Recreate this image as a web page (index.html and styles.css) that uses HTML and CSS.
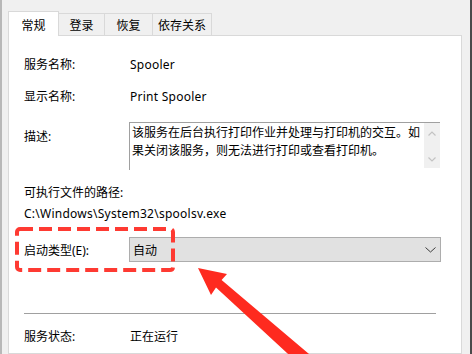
FILE: index.html
```html
<!DOCTYPE html>
<html>
<head>
<meta charset='utf-8'>
<title>Print Spooler 的属性</title>
<link rel="stylesheet" href="styles.css">
</head>
<body>

<div class="window">
	<div class="tabs">
		<div class="tab active w1">常规</div>
		<div class="tab w2">登录</div>
		<div class="tab w3">恢复</div>
		<div class="tab w4">依存关系</div>
	</div>

	<div class="panel">
		<div class="row first">
			<span class="label">服务名称:</span>
			<span class="value latin">Spooler</span>
		</div>
		<div class="row gap12">
			<span class="label">显示名称:</span>
			<span class="value latin">Print Spooler</span>
		</div>

		<div class="desc-row">
			<span class="label desc-label">描述:</span>
			<div class="desc">
				<div class="desc-text">该服务在后台执行打印作业并处理与打印机的交互。如果关闭该服务，则无法进行打印或查看打印机。</div>
				<div class="scroll">
					<svg width="8" height="5" viewBox="0 0 8 5"><polyline points="0.5,4.5 4,1 7.5,4.5" fill="none" stroke="#c3c3c3" stroke-width="1.2"/></svg>
					<svg width="8" height="5" viewBox="0 0 8 5"><polyline points="0.5,0.5 4,4 7.5,0.5" fill="none" stroke="#c3c3c3" stroke-width="1.2"/></svg>
				</div>
			</div>
		</div>

		<div class="row gap13">可执行文件的路径:</div>
		<div class="row gap1 latin">C:\Windows\System32\spoolsv.exe</div>

		<div class="combo-row">
			<span class="label">启动类型(E):</span>
			<div class="combo">
				<span>自动</span>
				<svg width="11" height="6" viewBox="0 0 11 6"><polyline points="0.5,0.5 5.5,5 10.5,0.5" fill="none" stroke="#3c3c3c" stroke-width="1"/></svg>
			</div>
		</div>

		<div class="sep"></div>

		<div class="row gap13">
			<span class="label">服务状态:</span>
			<span class="value">正在运行</span>
		</div>
	</div>
</div>

<!-- annotation drawn over the dialog -->
<svg class="marks" width="472" height="354" viewBox="0 0 472 354">
	<rect x="17" y="229" width="156" height="41" rx="3" fill="none" stroke="#fe3a32" stroke-width="4" stroke-dasharray="13 6"/>
	<polygon points="198,268 227,274 221.6,280 322,365 300,365 216,287.4 211,295" fill="#fe2a1f"/>
</svg>

</body>
</html>
```

FILE: styles.css
```css
body, html {
	margin: 0;
	background: #f0f0f0;
	font-family: "Noto Sans", "Noto Sans CJK SC", sans-serif;
	font-size: 12px;
	color: #000;
}

.window {
	box-sizing: border-box;
	width: 472px;
	height: 354px;
	overflow: hidden;
	border-left: 2px solid #b8b8b8;
	border-right: 2px solid #4a4a4a;
	padding: 11px 8px 0 6px;
	display: flex;
	flex-direction: column;
}

/* tabs */
.tabs {
	display: flex;
	align-items: flex-end;
	height: 24px;
	position: relative;
	z-index: 1;
}
.tab {
	box-sizing: border-box;
	height: 22px;
	border-top: 1px solid #d9d9d9;
	border-right: 1px solid #d9d9d9;
	display: flex;
	align-items: center;
	justify-content: center;
	background: #f0f0f0;
	font-family: "Noto Sans CJK SC", sans-serif;
}
.tab.active {
	height: 25px;
	margin-bottom: -1px;
	border-left: 1px solid #d9d9d9;
	background: white;
}
.w1 { width: 51px; }
.w2 { width: 46px; }
.w3 { width: 48px; }
.w4 { width: 59px; }

/* page */
.panel {
	flex: 1;
	background: white;
	border: 1px solid #d9d9d9;
	padding: 19px 0 0 15px;
}

.row {
	display: flex;
	height: 20px;
	line-height: 20px;
	white-space: nowrap;
}
.label {
	width: 106px;
	flex: none;
}
.latin {
	letter-spacing: 0.25px;
}
.first { margin-top: 0; }
.gap12 { margin-top: 12px; }
.gap13 { margin-top: 13px; }
.gap1 { margin-top: 1px; }

/* description */
.desc-row {
	display: flex;
	margin-top: 15px;
}
.desc-label {
	line-height: 20px;
	padding-top: 5px;
}
.desc {
	margin-left: -1px;
	box-sizing: border-box;
	width: 311px;
	height: 48px;
	border-top: 1px solid #a0a0a0;
	border-left: 1px solid #a0a0a0;
	display: flex;
}
.desc-text {
	flex: 1;
	padding-left: 2px;
	line-height: 18px;
	font-family: "Noto Sans CJK SC", sans-serif;
}
.scroll {
	width: 16px;
	height: 45px;
	background: #f0f0f0;
	display: flex;
	flex-direction: column;
	align-items: center;
	justify-content: space-between;
	padding: 8px 0 6px;
	box-sizing: border-box;
}

/* startup type */
.combo-row {
	display: flex;
	align-items: center;
	margin-top: 13px;
}
.combo {
	margin-left: -1px;
	box-sizing: border-box;
	width: 312px;
	height: 25px;
	background: #e1e1e1;
	border: 1px solid #adadad;
	display: flex;
	align-items: center;
	justify-content: space-between;
	padding: 0 4px 0 3px;
}

.sep {
	width: 412px;
	height: 1px;
	background: #a0a0a0;
	margin-top: 51px;
}

.marks {
	position: absolute;
	left: 0;
	top: 0;
	pointer-events: none;
}
```
